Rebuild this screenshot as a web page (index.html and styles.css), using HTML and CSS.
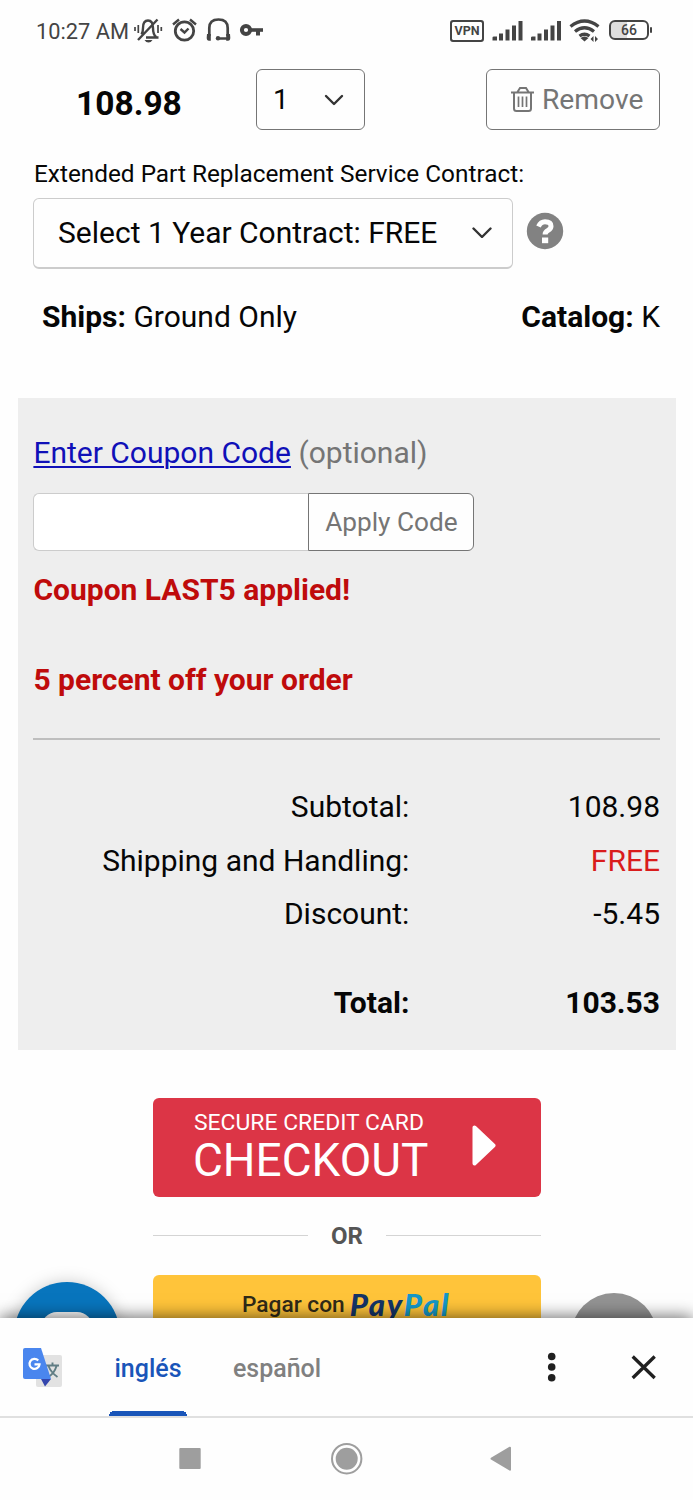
FILE: index.html
```html
<!DOCTYPE html>
<html lang="en">
<head>
<meta charset="utf-8">
<title>Cart</title>
<link rel="stylesheet" href="styles.css">
</head>
<body>
<div class="screen">
  <header class="status">
    <span class="clock">10:27 AM</span>
    <svg class="status-left" width="132" height="30" viewBox="132 16 132 30" fill="none" stroke="#444" stroke-width="2.4">
      <path d="M141.500 34.500q1.500-2 1.500-6.500c0-5 2-7.500 5-7.500s5 2.500 5 7.500c0 4 .3 6.500 3 9M146 37.500h12.500M138 40L157.500 19.500"/>
      <path d="M144.500 40h8q-1.500 2.500-4 2.500t-4-2.500z" fill="#444" stroke="none"/>
      <path d="M135 27v4M138.300 25v8M158 25v8M161.300 27v4" stroke-width="1.700"/>
      <circle cx="184.500" cy="31" r="9.200" stroke-width="2.800"/><path d="M180.500 29l4 3.500 4-4M173 24.500l6-5M196 24.500l-6-5"/>
      <path d="M209.300 36v-8c0-6 3.500-8.500 9.200-8.500s9.200 2.500 9.200 8.500v8M217 38.500h10" stroke-width="2.700"/>
      <path d="M207 34h3.800v6.700H209q-2.300 0-2.300-3zM226.200 34h3.800l.3 3.700q0 3-2.300 3h-1.800z" fill="#444" stroke="none"/>
      <circle cx="218" cy="38.300" r="2.200" fill="#444" stroke="none"/>
      <circle cx="246" cy="30" r="4.100" stroke-width="4"/><path d="M250 30h13" stroke-width="3.600"/><path d="M258 31v4.500" stroke-width="4"/>
    </svg>
    <span class="vpn">VPN</span>
    <svg class="status-right" width="112" height="30" viewBox="490 16 112 30" fill="#444">
      <path id="bars" d="M492.500 40.500v-3q0-1 1.500-1h3v4zM499 33.500h4v7h-4zM505.500 29.500h4v11h-4zM512 25.500h4v15h-4zM518.500 21h4v19.500h-4z"/>
      <use href="#bars" x="38.500"/>
      <g fill="none" stroke="#444" stroke-width="3.300"><path d="M570.500 26.500q14-11 28 0M575 31.500q9.500-7.500 19 0M579.500 36q5-3.500 10 0"/></g>
      <path d="M580.500 38q4-3 8 0l-4 3.500z"/><path d="M593.500 36v6l-3-3zM595 42v-6l3 3z"/>
    </svg>
    <span class="battery"><span class="battery-text">66</span></span><span class="battery-tip"></span>
  </header>

  <main class="page">
    <section class="item-row">
      <div class="price">108.98</div>
      <div class="qty"><span>1</span>
        <svg width="20" height="12" viewBox="0 0 20 12"><path d="M2 2l8 8 8-8" fill="none" stroke="#333" stroke-width="2.400" stroke-linecap="round" stroke-linejoin="round"/></svg>
      </div>
      <div class="remove">
        <svg width="23" height="25" viewBox="0 0 23 25" fill="none" stroke="#757575" stroke-width="2"><path d="M0 5.500h23M6.500 5l2.500-4h6l2.500 4M3 6v15.500q0 2.500 2.500 2.500h12q2.500 0 2.500-2.500V6"/><path d="M7.500 9.500v10.500M11.500 9.500v10.500M15.500 9.500v10.500" stroke-width="1.700"/></svg>
        <span>Remove</span>
      </div>
    </section>
    <div class="contract-label">Extended Part Replacement Service Contract:</div>
    <section class="contract-row">
      <div class="contract"><span>Select 1 Year Contract: FREE</span>
        <svg width="20" height="12" viewBox="0 0 20 12"><path d="M1.500 2.500l8.500 8.500 8.500-8.500" fill="none" stroke="#333" stroke-width="2.400" stroke-linecap="round" stroke-linejoin="round"/></svg>
      </div>
      <svg class="help" width="38" height="38" viewBox="0 0 38 38"><circle cx="19" cy="19" r="18.200" fill="#828282"/><path d="M12.500 14.500q2.200-4.700 6.500-4.700 6 0 6 4.400 0 2.300-3 4.200-2.900 1.700-2.900 4" fill="none" stroke="#fff" stroke-width="5"/><path d="M16 25.500h6.200v5.700H16z" fill="#fff"/></svg>
    </section>
    <section class="meta"><div><b>Ships:</b> <span>Ground Only</span></div><div><b>Catalog:</b> <span>K</span></div></section>

    <section class="summary">
      <div class="coupon-title"><a class="coupon-link">Enter Coupon Code</a> <span>(optional)</span></div>
      <div class="coupon-form"><div class="coupon-input"></div><div class="coupon-apply"><span>Apply Code</span></div></div>
      <p class="notice notice-applied">Coupon LAST5 applied!</p>
      <p class="notice notice-offer">5 percent off your order</p>
      <div class="totals">
        <div class="line"><span class="name">Subtotal:</span><span>108.98</span></div>
        <div class="line"><span class="name">Shipping and Handling:</span><span class="free">FREE</span></div>
        <div class="line"><span class="name">Discount:</span><span>-5.45</span></div>
        <div class="line total"><span class="name">Total:</span><span>103.53</span></div>
      </div>
    </section>

    <section class="pay">
      <div class="checkout">
        <div class="checkout-text"><span class="small">SECURE CREDIT CARD</span><span class="big">CHECKOUT</span></div>
        <svg class="arrow" width="24" height="42" viewBox="0 0 24 42"><path d="M2.500 2.500v36L21.500 20.500z" fill="#fff" stroke="#fff" stroke-width="4" stroke-linejoin="round"/></svg>
      </div>
      <div class="or"><span>OR</span></div>
    </section>
    <section class="pay-bottom">
      <svg class="chat" width="120" height="60" viewBox="0 0 120 60"><circle cx="67" cy="61" r="53" fill="#0875bd"/><rect x="41" y="38" width="52" height="40" rx="16" fill="#fff"/></svg>
      <div class="paypal"><span class="paypal-text">Pagar con</span><span class="paypal-logo"><span class="pay-a">Pay</span><span class="pay-b">Pal</span></span></div>
      <div class="totop"></div>
    </section>
  </main>

  <section class="translate">
    <svg class="g-icon" width="42" height="42" viewBox="22 1346 42 42"><rect x="36" y="1355" width="26" height="32" rx="2" fill="#e2e2e2"/><path d="M46 1365.500h13M52.500 1362.500v3M56.500 1366q-2 7-8 11M48.500 1366q2.500 6.500 9 11" fill="none" stroke="#607d84" stroke-width="1.900"/><path d="M41 1379h10l-6 7.500z" fill="#3446ad"/><path d="M25 1348h16l10 31H25q-2 0-2-2v-27q0-2 2-2z" fill="#4a86ee"/><path d="M38.200 1360.500a5 5 0 1 0 1.300 3.800h-5" fill="none" stroke="#fff" stroke-width="2.300"/></svg>
    <div class="tab active"><span>inglés</span></div>
    <div class="tab other"><span>español</span></div>
    <svg class="actions" width="110" height="32" viewBox="546 1351 110 32"><g fill="#202020"><circle cx="551.700" cy="1356.500" r="3.800"/><circle cx="551.700" cy="1367" r="3.800"/><circle cx="551.700" cy="1377.700" r="3.800"/></g><path d="M632.700 1356.500l22 21.500M654.700 1356.500l-22 21.500" stroke="#202020" stroke-width="3.300"/></svg>
  </section>
  <nav class="nav">
    <svg width="693" height="82" viewBox="0 1418 693 82" fill="#9e9e9e"><rect x="179.300" y="1448" width="21.400" height="21" rx="1"/><circle cx="346.700" cy="1458.700" r="14.700" fill="none" stroke="#9e9e9e" stroke-width="2"/><circle cx="346.700" cy="1458.700" r="11"/><path d="M491.500 1458.700l18.500-11v22z" stroke="#9e9e9e" stroke-width="2" stroke-linejoin="round"/></svg>
  </nav>
</div>
</body>
</html>
```
FILE: styles.css
```css
* { box-sizing: border-box; }
body { margin: 0; background: #fefefe; color: #060606; font-family: Roboto, sans-serif; }
svg { display: block; flex: none; }
.screen { width: 693px; height: 1500px; overflow: hidden; display: flex; flex-direction: column; white-space: nowrap; }
.status { height: 62px; flex: none; display: flex; align-items: center; padding-left: 36px; color: #444; }
.clock { width: 96px; font-size: 21.800px; }
.status-left { margin-right: 186px; }
.vpn { width: 34px; height: 22px; border: 2.500px solid #444; outline: .5px solid #444; outline-offset: -2.500px; border-radius: 3px; display: flex; align-items: center; justify-content: center; font-size: 12.500px; font-weight: 700; margin-top: -1px; }
.status-right { margin-left: 6px; margin-right: 7px; }
.battery { width: 40px; height: 20px; border: 2px solid #444; border-radius: 6px; background: linear-gradient(90deg, #ddd 45%, #fefefe 45%); display: flex; align-items: center; justify-content: center; font-size: 14px; font-weight: 500; margin-top: -2px; }
.battery-tip { width: 2px; height: 6px; margin: -2px 0 0 1px; background: #444; border-radius: 1px; }
.page { height: 1256px; flex: none; display: flex; flex-direction: column; overflow: hidden; }
.item-row { display: flex; margin-top: 7px; height: 61px; padding-left: 76px; flex: none; }
.price { width: 180px; font-size: 33.500px; font-weight: 700; line-height: 70px; }
.qty { width: 109px; border: 1px solid #757575; border-radius: 6px; display: flex; align-items: center; justify-content: space-between; padding: 0 20px 0 16px; font-size: 28px; }
.remove { width: 174px; margin-left: 121px; border: 1px solid #757575; border-radius: 6px; display: flex; align-items: center; gap: 8px; padding-left: 24px; color: #757575; font-size: 28.200px; }
.contract-label { height: 68px; padding: 9px 0 0 34px; line-height: 70px; font-size: 24.350px; flex: none; }
.contract-row { display: flex; height: 71px; padding-left: 33px; flex: none; }
.contract { width: 480px; border: 1px solid #ccc; border-bottom-width: 2px; border-radius: 6px; display: flex; align-items: center; justify-content: space-between; padding: 0 20px 2px 24px; font-size: 30px; }
.help { margin: 14px 0 0 13px; }
.meta { display: flex; justify-content: space-between; height: 129px; padding: 28px 33px 0 42px; font-size: 30px; line-height: 40px; flex: none; }
.summary { width: 658px; height: 652px; margin-left: 18px; padding: 35px 16px 0 15.400px; background: #eee; font-size: 30px; flex: none; }
.coupon-title { height: 60px; line-height: 40px; color: #757575; }
.coupon-link { color: #1010b8; text-decoration: underline; text-decoration-thickness: 2px; text-underline-offset: 3px; }
.coupon-form { display: flex; height: 58px; }
.coupon-input { width: 275px; background: #fff; border: 1px solid #ccc; border-right: 0; border-radius: 6px 0 0 6px; }
.coupon-apply { width: 166px; border: 1px solid #757575; border-radius: 0 6px 6px 0; background: #fefefe; color: #757575; font-size: 26.200px; display: flex; align-items: center; justify-content: center; }
.notice { margin: 0; font-weight: 700; color: #bf0b0b; line-height: 40px; }
.notice-applied { margin-top: 19px; }
.notice-offer { margin-top: 50px; }
.totals { margin-top: 38px; border-top: 2px solid #bebebe; padding-top: 40px; }
.line { height: 53.500px; display: flex; justify-content: space-between; line-height: 54px; }
.name { width: 376px; text-align: right; }
.free { color: #d91c1c; }
.total { margin-top: 35px; font-weight: 700; }
.pay { width: 388px; margin: 48px 0 0 153px; flex: none; }
.checkout { height: 99px; background: #dc3546; border-radius: 6px; color: #fff; display: flex; align-items: center; padding: 0 45px 0 40px; justify-content: space-between; }
.checkout-text { display: flex; flex-direction: column; }
.small { padding-left: 1px; font-size: 22.900px; line-height: 26px; }
.big { font-size: 45.900px; line-height: 49px; margin-bottom: 1px; }
.arrow { margin-top: -4px; }
.or { height: 77px; display: flex; align-items: center; justify-content: space-between; font-size: 24px; font-weight: 700; color: #555; }
.or::before, .or::after { content: ""; width: 155px; height: 1.500px; background: #d4d4d4; }
.pay-bottom { display: flex; height: 60px; flex: none; }
.chat { filter: drop-shadow(0 0 8px #ccc); }
.paypal { width: 388px; height: 60px; margin: 1px 0 0 33px; border-radius: 6px 6px 0 0; background: #ffc43a; display: flex; padding-left: 89px; line-height: 60px; gap: 5px; }
.paypal-text { font-size: 22.700px; font-weight: 500; color: #302a18; }
.paypal-logo { font: italic 900 31px/58px Lato, sans-serif; letter-spacing: 1.800px; }
.pay-a { color: #143467; }
.pay-b { color: #1597c8; }
.totop { width: 86px; height: 86px; border-radius: 50%; margin: 19px 0 0 30px; background: #939393; flex: none; }
.translate { position: relative; height: 100px; flex: none; background: #fefefe; border-bottom: 2px solid #e0e0e0; box-shadow: 0 -1px 16px rgba(0,0,0,.6); display: flex; align-items: center; padding-left: 22px; }
.g-icon { margin-top: -1px; }
.tab { width: 78px; height: 98px; margin-left: 45px; padding-top: 2px; display: flex; align-items: center; justify-content: center; font-size: 25px; font-weight: 500; color: #808080; }
.tab.other { margin-left: 51px; }
.tab.active { color: #1955b9; background: radial-gradient(circle at 5px 5px, #1955b9 5px, transparent 5px) 0 93px / 10px 5px no-repeat, radial-gradient(circle at 0 5px, #1955b9 5px, transparent 5px) 73px 93px / 5px 5px no-repeat, linear-gradient(#1955b9, #1955b9) 5px 93px / 68px 5px no-repeat; }
.actions { margin-left: 230px; }
.nav { position: relative; height: 82px; flex: none; background: #fefefe; }
```
